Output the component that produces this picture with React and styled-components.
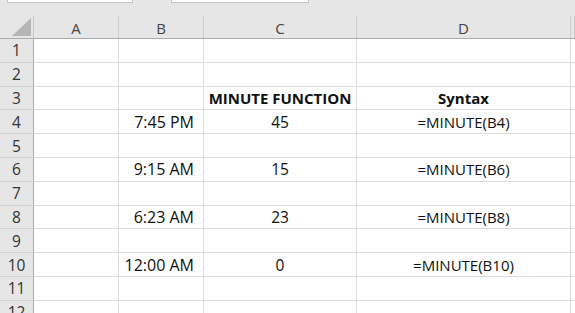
import React from 'react';
import styled, { createGlobalStyle } from 'styled-components';

const GlobalStyle = createGlobalStyle`
  html, body {
    margin: 0;
    padding: 0;
    background: #ffffff;
    overflow: hidden;
  }
  body {
    font-family: 'Open Sans', 'Liberation Sans', sans-serif;
  }
`;

const COLS = ['A', 'B', 'C', 'D', ''];
const TEMPLATE = '34px 85px 85px 153px 214px 1fr';
const ROW_H = 23.8;

const rows = [
  {},
  {},
  { c: 'MINUTE FUNCTION', d: 'Syntax', bold: true },
  { b: '7:45 PM', c: '45', d: '=MINUTE(B4)' },
  {},
  { b: '9:15 AM', c: '15', d: '=MINUTE(B6)' },
  {},
  { b: '6:23 AM', c: '23', d: '=MINUTE(B8)' },
  {},
  { b: '12:00 AM', c: '0', d: '=MINUTE(B10)' },
  {},
  {},
];

const Window = styled.div`
  width: 575px;
  height: 313px;
  overflow: hidden;
  background: #ffffff;
  display: flex;
  flex-direction: column;
`;

const Ribbon = styled.div`
  height: 16px;
  flex: none;
  background: #e6e6e6;
  display: flex;
  align-items: flex-start;
  gap: 38px;
  padding-left: 7px;
`;

const FieldBox = styled.div`
  width: ${p => p.w}px;
  height: 2px;
  background: #ffffff;
  border-bottom: 1px solid #c6c6c6;
  border-left: 1px solid #c6c6c6;
  border-right: 1px solid #c6c6c6;
`;

const Grid = styled.div`
  display: grid;
  grid-template-columns: ${TEMPLATE};
  grid-auto-rows: ${ROW_H}px;
`;

const HeaderRow = styled.div`
  display: grid;
  grid-template-columns: ${TEMPLATE};
  height: 22px;
  flex: none;
  background: #e6e6e6;
  border-bottom: 1px solid #ababab;
`;

const Corner = styled.div`
  position: relative;
  border-right: 1px solid #c8c8c8;

  &::after {
    content: '';
    position: absolute;
    right: 2px;
    bottom: 2px;
    width: 0;
    height: 0;
    border-left: 19px solid transparent;
    border-bottom: 18px solid #b5b5b5;
  }
`;

const ColHead = styled.div`
  display: flex;
  align-items: center;
  justify-content: center;
  font-size: 15px;
  color: #444444;
  border-right: 1px solid #cdcdcd;
  padding-top: 1px;
`;

const RowHead = styled.div`
  display: flex;
  align-items: center;
  justify-content: center;
  background: #e6e6e6;
  border-right: 1px solid #ababab;
  border-bottom: 1px solid #d2d2d2;
  font-size: 15.5px;
  color: #333333;
`;

const Cell = styled.div`
  display: flex;
  align-items: center;
  justify-content: ${p => p.align || 'flex-start'};
  padding: 0 ${p => p.pad ?? 7}px;
  border-right: 1px solid #dcdcdc;
  border-bottom: 1px solid #dcdcdc;
  font-size: ${p => p.size || 15}px;
  font-weight: ${p => (p.bold ? 700 : 400)};
  color: #111111;
  white-space: nowrap;
  overflow: hidden;
`;

export default function App() {
  return (
    <Window>
      <GlobalStyle />
      <Ribbon>
        <FieldBox w={124} />
        <FieldBox w={136} />
      </Ribbon>
      <HeaderRow>
        <Corner />
        {COLS.map(c => (
          <ColHead key={c || 'E'}>{c}</ColHead>
        ))}
      </HeaderRow>
      <Grid>
        {rows.map((r, i) => (
          <React.Fragment key={i}>
            <RowHead>{i + 1}</RowHead>
            <Cell />
            <Cell align="flex-end" size={16} pad={9}>{r.b}</Cell>
            <Cell align="center" bold={r.bold} size={r.bold ? 15 : 15.5}>{r.c}</Cell>
            <Cell align="center" bold={r.bold}>{r.d}</Cell>
            <Cell />
          </React.Fragment>
        ))}
      </Grid>
    </Window>
  );
}
